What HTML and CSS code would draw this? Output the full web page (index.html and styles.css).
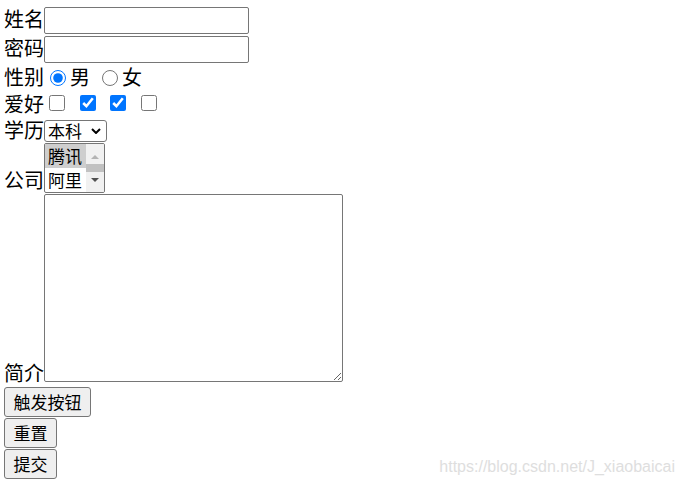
FILE: index.html
```html
<!DOCTYPE html>
<html>
<head>
    <meta charset="utf-8">
    <title>表单</title>
    <link rel="stylesheet" href="styles.css">
</head>
<body>
    <form class="form" action="#">
        <div class="row row-text">
            <label class="field-label" for="username">姓名</label>
            <input class="text-input" type="text" id="username" name="username">
        </div>

        <div class="row row-text">
            <label class="field-label" for="password">密码</label>
            <input class="text-input" type="password" id="password" name="password">
        </div>

        <div class="row row-radio">
            <span class="field-label">性别</span>
            <input class="radio" type="radio" name="sex" value="male" checked><span class="choice">男</span>
            <input class="radio" type="radio" name="sex" value="female"><span class="choice">女</span>
        </div>

        <div class="row row-check">
            <span class="field-label">爱好</span>
            <input class="check" type="checkbox" name="hobby" value="1">
            <input class="check" type="checkbox" name="hobby" value="2" checked>
            <input class="check" type="checkbox" name="hobby" value="3" checked>
            <input class="check" type="checkbox" name="hobby" value="4">
        </div>

        <div class="row row-select">
            <label class="field-label" for="degree">学历</label>
            <div class="select-wrap">
                <select class="select" id="degree" name="degree">
                    <option>本科</option>
                    <option>硕士</option>
                    <option>博士</option>
                </select>
                <svg class="chevron" width="10" height="6" viewBox="0 0 10 6">
                    <path d="M1 1 L5 5 L9 1" fill="none" stroke="#000" stroke-width="2"/>
                </svg>
            </div>
        </div>

        <div class="row row-list">
            <span class="field-label">公司</span>
            <div class="listbox" role="listbox">
                <div class="options">
                    <div class="option selected" role="option">腾讯</div>
                    <div class="option" role="option">阿里</div>
                </div>
                <div class="scrollbar">
                    <div class="scroll-btn up"><span class="arrow-up"></span></div>
                    <div class="thumb"></div>
                    <div class="scroll-btn down"><span class="arrow-down"></span></div>
                </div>
            </div>
        </div>

        <div class="row row-area">
            <label class="field-label" for="intro">简介</label>
            <textarea class="textarea" id="intro" name="intro"></textarea>
        </div>

        <div class="buttons">
            <button class="btn" type="button">触发按钮</button>
            <button class="btn" type="reset">重置</button>
            <button class="btn" type="submit">提交</button>
        </div>
    </form>

    <div class="watermark">https://blog.csdn.net/J_xiaobaicai</div>
</body>
</html>
```

FILE: styles.css
```css
* {
    box-sizing: border-box;
}

body {
    margin: 5px 4px 0;
    font-family: "Noto Sans CJK SC", "Microsoft YaHei", sans-serif;
    font-size: 20px;
    color: #000;
    background: #fff;
}

.row {
    display: flex;
    align-items: flex-end;
}

.field-label {
    width: 40px;
    flex-shrink: 0;
    line-height: 29px;
    white-space: nowrap;
}

/* text inputs */
.row-text {
    height: 29px;
}

.row-text .field-label {
    line-height: 27px;
    margin-bottom: 2px;
}

.text-input {
    width: 205px;
    height: 27px;
    margin: 0;
    padding: 1px 3px;
    border: 1px solid #767676;
    border-radius: 2px;
    font-family: inherit;
    font-size: 17px;
}

/* radios */
.row-radio {
    height: 27px;
}

.row-radio .field-label,
.row-check .field-label {
    line-height: 24px;
    padding-bottom: 1px;
}

.radio {
    width: 16px;
    height: 16px;
    margin: 0 4px 4px 6px;
}

.choice {
    line-height: 24px;
    padding-bottom: 1px;
    margin-right: 6px;
}

/* checkboxes */
.row-check {
    height: 27px;
}

.check {
    width: 16px;
    height: 16px;
    margin: 0 9.5px 6px 5px;
}

/* select */
.row-select {
    height: 26px;
}

.row-select .field-label {
    line-height: 22px;
    padding-bottom: 2px;
}

.select-wrap {
    position: relative;
    margin-bottom: 1px;
}

.select {
    display: block;
    width: 63px;
    height: 22px;
    margin: 0;
    padding: 0 0 0 3px;
    border: 1px solid #767676;
    border-radius: 3px;
    background: #fff;
    font-family: inherit;
    font-size: 17px;
    line-height: 20px;
    color: #000;
    appearance: none;
    -webkit-appearance: none;
}

.chevron {
    position: absolute;
    right: 6px;
    top: 8px;
    pointer-events: none;
}

/* listbox */
.row-list {
    height: 51px;
}

.listbox {
    display: flex;
    width: 61px;
    height: 50px;
    margin-bottom: 1px;
    border: 1px solid #767676;
    border-radius: 2px;
    background: #fff;
    overflow: hidden;
}

.options {
    width: 41px;
}

.option {
    height: 24px;
    padding-left: 3px;
    font-size: 17px;
    line-height: 24px;
    white-space: nowrap;
}

.option.selected {
    background: #cecece;
}

.scrollbar {
    display: flex;
    flex-direction: column;
    width: 18px;
    background: #f1f1f1;
}

.scroll-btn {
    display: flex;
    justify-content: center;
    height: 20px;
}

.scroll-btn.up {
    padding-top: 11px;
}

.scroll-btn.down {
    padding-top: 6px;
}

.arrow-up {
    width: 0;
    height: 0;
    border-left: 4px solid transparent;
    border-right: 4px solid transparent;
    border-bottom: 4px solid #b4b4b4;
}

.arrow-down {
    width: 0;
    height: 0;
    border-left: 4px solid transparent;
    border-right: 4px solid transparent;
    border-top: 4px solid #505050;
}

.thumb {
    height: 8px;
    background: #c1c1c1;
}

/* textarea */
.row-area {
    height: 193px;
}

.textarea {
    width: 299px;
    height: 188px;
    margin: 0 0 5px;
    padding: 2px;
    border: 1px solid #767676;
    border-radius: 2px;
    font-family: inherit;
    font-size: 17px;
}

/* buttons */
.buttons {
    display: flex;
    flex-direction: column;
    align-items: flex-start;
    gap: 1px;
}

.btn {
    height: 30px;
    margin: 0;
    padding: 0 8.5px;
    border: 1px solid #767676;
    border-radius: 3px;
    background: #efefef;
    font-family: inherit;
    font-size: 17px;
    line-height: 28px;
    color: #000;
}

.watermark {
    position: absolute;
    right: 9px;
    top: 458px;
    font-family: "Liberation Sans", Arial, sans-serif;
    font-size: 16px;
    color: #dedede;
}
```
